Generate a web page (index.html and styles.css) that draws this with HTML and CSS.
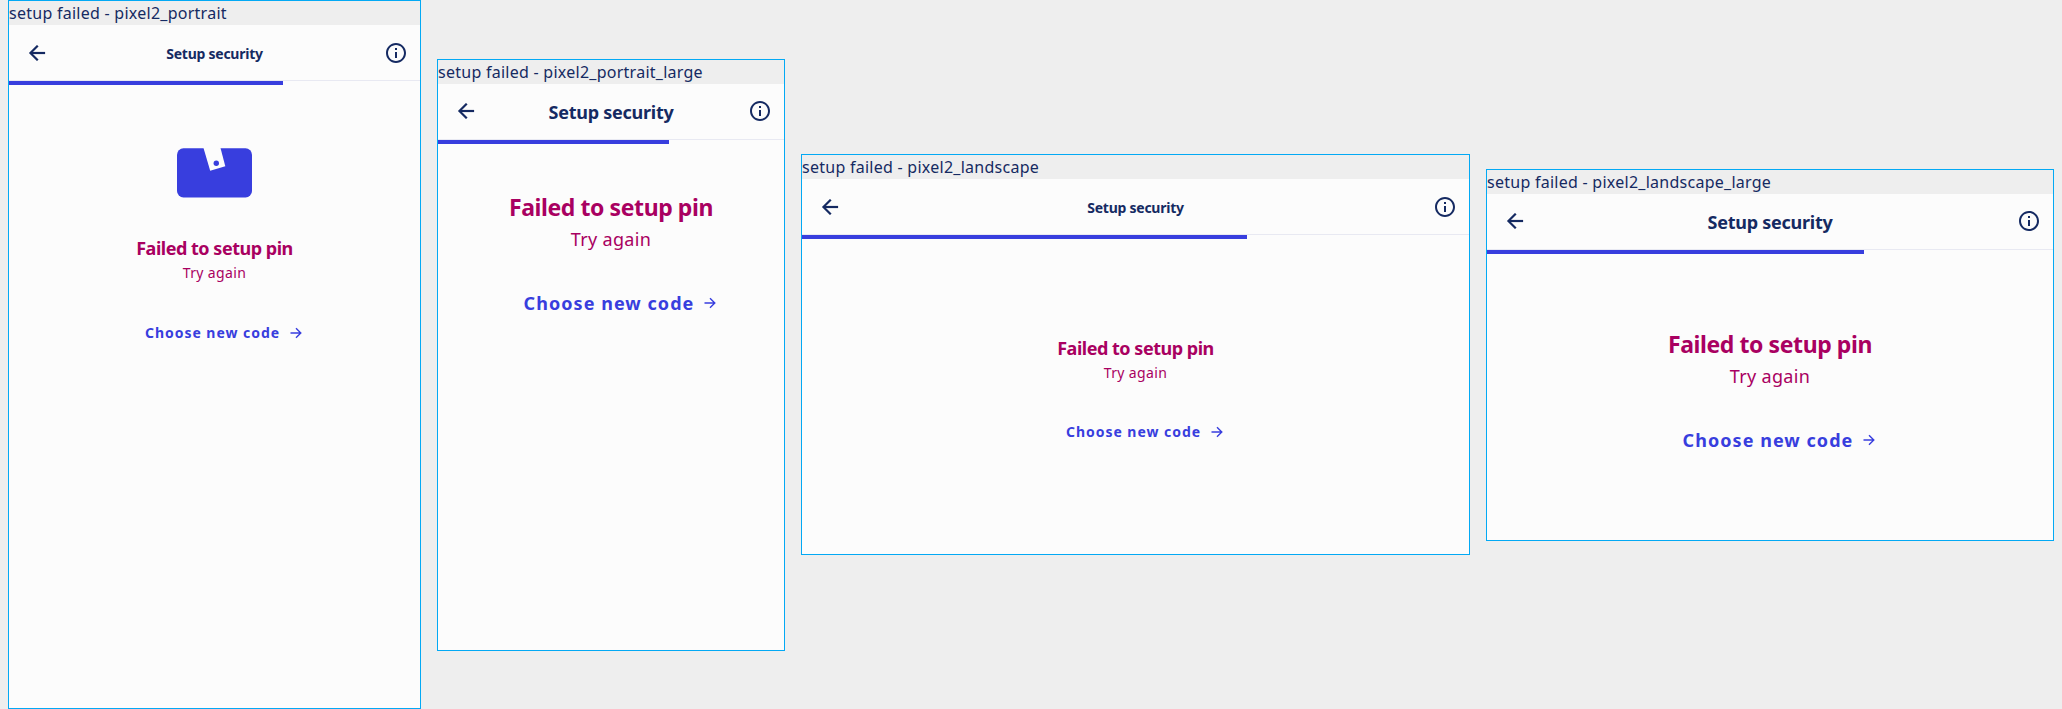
FILE: index.html
```
<!DOCTYPE html>
<html lang="en">
<head>
<meta charset="utf-8">
<title>setup failed</title>
<link rel="stylesheet" href="styles.css">
</head>
<body>
<svg width="0" height="0" class="defs">
  <symbol id="back" viewBox="0 0 24 24"><path d="M20 11H7.83l5.59-5.59L12 4l-8 8 8 8 1.41-1.41L7.83 13H20v-2z" fill="currentColor" stroke="currentColor" stroke-width=".2"/></symbol>
  <symbol id="info" viewBox="0 0 24 24"><path d="M11 7h2v2h-2zm0 4h2v6h-2zm1-9C6.48 2 2 6.48 2 12s4.48 10 10 10 10-4.48 10-10S17.52 2 12 2zm0 18c-4.41 0-8-3.59-8-8s3.59-8 8-8 8 3.59 8 8-3.59 8-8 8z" fill="currentColor"/></symbol>
  <symbol id="next" viewBox="0 0 12 12"><path d="M.5 6H10.6M6 1.2L10.8 6 6 10.8" fill="none" stroke="currentColor" stroke-width="1.4"/></symbol>
</svg>
<main class="board">
  <section class="frame portrait">
    <div class="label">setup failed - pixel2_portrait</div>
    <header class="bar"><svg class="icon"><use href="#back"/></svg><h1 class="heading">Setup security</h1><svg class="icon"><use href="#info"/></svg></header>
    <div class="progress"></div>
    <div class="content">
      <svg class="wallet" viewBox="0 0 75 50"><rect y=".3" width="75" height="49.2" rx="6.5" fill="#383ede"/><path d="M26.5 0H43.5L48.3 18.2 33.2 22.8z" fill="#fcfcfc"/><circle cx="39.3" cy="15.2" r="2.7" fill="#383ede"/></svg>
      <h2 class="title">Failed to setup pin</h2>
      <p class="sub">Try again</p>
      <div class="action"><span class="action-text">Choose new code</span><svg class="arrow"><use href="#next"/></svg></div>
    </div>
  </section>
  <section class="frame portrait-large large">
    <div class="label">setup failed - pixel2_portrait_large</div>
    <header class="bar"><svg class="icon"><use href="#back"/></svg><h1 class="heading">Setup security</h1><svg class="icon"><use href="#info"/></svg></header>
    <div class="progress"></div>
    <div class="content">
      <h2 class="title">Failed to setup pin</h2>
      <p class="sub">Try again</p>
      <div class="action"><span class="action-text">Choose new code</span><svg class="arrow"><use href="#next"/></svg></div>
    </div>
  </section>
  <section class="frame landscape">
    <div class="label">setup failed - pixel2_landscape</div>
    <header class="bar"><svg class="icon"><use href="#back"/></svg><h1 class="heading">Setup security</h1><svg class="icon"><use href="#info"/></svg></header>
    <div class="progress"></div>
    <div class="content">
      <h2 class="title">Failed to setup pin</h2>
      <p class="sub">Try again</p>
      <div class="action"><span class="action-text">Choose new code</span><svg class="arrow"><use href="#next"/></svg></div>
    </div>
  </section>
  <section class="frame landscape-large large">
    <div class="label">setup failed - pixel2_landscape_large</div>
    <header class="bar"><svg class="icon"><use href="#back"/></svg><h1 class="heading">Setup security</h1><svg class="icon"><use href="#info"/></svg></header>
    <div class="progress"></div>
    <div class="content">
      <h2 class="title">Failed to setup pin</h2>
      <p class="sub">Try again</p>
      <div class="action"><span class="action-text">Choose new code</span><svg class="arrow"><use href="#next"/></svg></div>
    </div>
  </section>
</main>
</body>
</html>
```
FILE: styles.css
```
* { box-sizing: border-box; }
body { margin: 0; background: #eee; color: #152a62; font-family: "Noto Sans", sans-serif; overflow: hidden; }
h1, h2, p { margin: 0; white-space: nowrap; }
.defs { display: block; }
.board { display: flex; gap: 16px; padding: 0 8px; height: 709px; align-items: center; }
.frame { flex: none; border: 1px solid #03a9f4; background: #fcfcfc; display: flex; flex-direction: column; }
.portrait { width: 413px; height: 709px; }
.portrait-large { width: 348px; height: 592px; }
.landscape { width: 669px; height: 401px; }
.landscape-large { width: 568px; height: 372px; }
.label { height: 24px; background: #eee; font-size: 16px; line-height: 24px; white-space: nowrap; overflow: hidden; letter-spacing: 0.26px; }
.bar { height: 56px; padding: 0 12px 0 16px; display: flex; align-items: center; justify-content: space-between; border-bottom: 1px solid #e8e9f2; }
.icon { width: 24px; height: 24px; }
.heading { margin: 2px 4px 0 0; font-size: 14px; font-weight: 700; line-height: 20px; letter-spacing: -0.25px; }
.progress { height: 4px; width: 66.667%; background: #383ede; }
.content { display: flex; flex-direction: column; align-items: center; }
.wallet { width: 75px; height: 50px; margin: 63px 0 36px; }
.title { padding-bottom: 1px; color: #a90061; font-size: 18px; line-height: 28px; letter-spacing: -0.48px; }
.sub { color: #a90061; font-size: 14px; line-height: 20px; letter-spacing: 0.35px; }
.action { display: flex; align-items: center; gap: 10px; margin: 40px 0 0 18px; color: #383ede; }
.action-text { font-size: 14px; line-height: 20px; font-weight: 700; letter-spacing: 0.97px; }
.arrow { width: 12px; height: 12px; }
.landscape .title { margin-top: 95px; }
.landscape .action { margin-top: 39px; }
.large .heading { font-size: 18px; }
.large .title { font-size: 23px; line-height: 34px; letter-spacing: -0.41px; }
.large .sub { font-size: 18px; line-height: 28px; }
.large .action { margin-top: 38px; }
.large .action-text { font-size: 18px; line-height: 24px; letter-spacing: 1.05px; }
.portrait-large .title { margin-top: 46px; }
.landscape-large .title { margin-top: 73px; }
```
